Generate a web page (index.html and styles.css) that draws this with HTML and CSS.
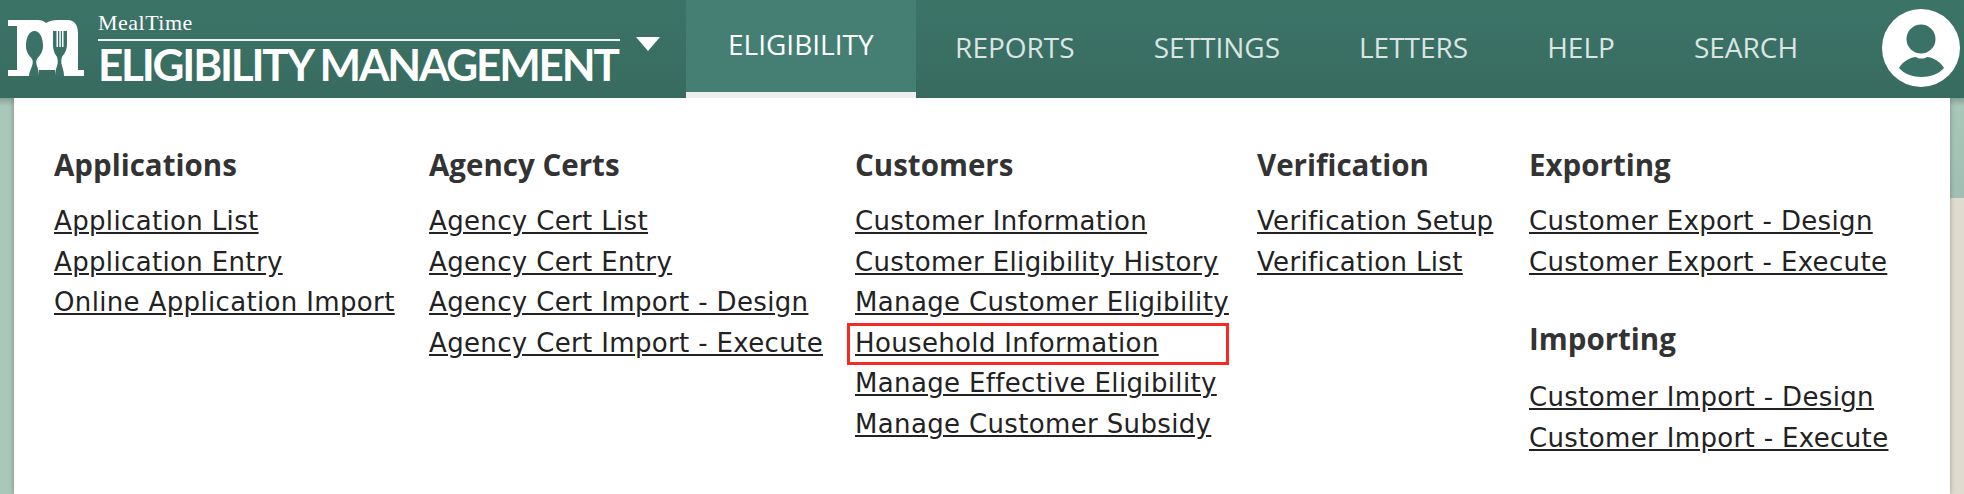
FILE: index.html
```html
<!DOCTYPE html>
<html lang="en">
  <head>
    <meta charset="UTF-8" />
    <title>MealTime Eligibility Management</title>
    <link rel="stylesheet" href="styles.css">
  </head>
  <body>
    <header class="topbar">
      <div class="brand">
        <svg class="brand-logo" viewBox="0 0 76 56" aria-hidden="true">
          <path fill="#fff" d="M0 0H30C33 0 36 1 38 3C41 1 45 0 50 0H60C66 0 70 5 70 13V50H76V56H47V50H31V56H0V50H9V6H0Z"/>
          <path fill="#3b7267" d="M26.500 11C21 11 18 18 18 26C18 33 22 36 24 39C25 41 25 43 24 46C23 49 21 52 21 56H31C31 52 30 49 29 46C28 43 28 41 29 39C31 36 35 33 35 26C35 18 32 11 26.500 11Z"/>
          <path fill="#3b7267" d="M45 11H59V24C59 31 56 34 54 37C53 40 53 43 54 46C55 49 56 52 56 56H47C47 52 48 49 49 46C50 43 50 40 49 37C47 34 45 31 45 24Z"/>
          <path fill="#fff" d="M48.500 11H50V27H48.500ZM51.300 11H52.800V27H51.300ZM54 11H55.500V27H54Z"/>
        </svg>
        <div class="brand-text">
          <div class="brand-small">MealTime</div>
          <div class="brand-big">ELIGIBILITY MANAGEMENT</div>
        </div>
        <span class="brand-caret"></span>
      </div>
      <nav class="nav">
        <a class="nav-item active" href="#">ELIGIBILITY</a>
        <a class="nav-item" href="#">REPORTS</a>
        <a class="nav-item" href="#">SETTINGS</a>
        <a class="nav-item" href="#">LETTERS</a>
        <a class="nav-item" href="#">HELP</a>
        <a class="nav-item" href="#">SEARCH</a>
      </nav>
      <svg class="avatar" viewBox="0 0 78 78" aria-hidden="true">
        <circle cx="39" cy="39" r="39" fill="#fff"/>
        <circle cx="39" cy="30" r="14.500" fill="#3b7267"/>
        <path fill="#3b7267" d="M17 59C21 52 29 48 34 48C37 50 42 50 45 48C50 48 58 52 62 59C57 65 48 68 39.500 68C31 68 22 65 17 59Z"/>
      </svg>
    </header>

    <div class="page">
      <div class="menu">
        <div class="col col-apps">
          <h2>Applications</h2>
          <a href="#">Application List</a>
          <a href="#">Application Entry</a>
          <a href="#">Online Application Import</a>
        </div>
        <div class="col col-certs">
          <h2>Agency Certs</h2>
          <a href="#">Agency Cert List</a>
          <a href="#">Agency Cert Entry</a>
          <a href="#">Agency Cert Import - Design</a>
          <a href="#">Agency Cert Import - Execute</a>
        </div>
        <div class="col col-cust">
          <h2>Customers</h2>
          <a href="#">Customer Information</a>
          <a href="#">Customer Eligibility History</a>
          <a href="#">Manage Customer Eligibility</a>
          <a class="marked" href="#">Household Information</a>
          <a href="#">Manage Effective Eligibility</a>
          <a href="#">Manage Customer Subsidy</a>
        </div>
        <div class="col col-verify">
          <h2>Verification</h2>
          <a href="#">Verification Setup</a>
          <a href="#">Verification List</a>
        </div>
        <div class="col col-export">
          <h2>Exporting</h2>
          <a href="#">Customer Export - Design</a>
          <a href="#">Customer Export - Execute</a>
          <h2 class="second">Importing</h2>
          <a href="#">Customer Import - Design</a>
          <a href="#">Customer Import - Execute</a>
        </div>
      </div>
    </div>
  </body>
</html>
```

FILE: styles.css
```css
body {
  margin: 0;
  height: 494px;
  overflow: hidden;
  display: flex;
  flex-direction: column;
  font-family: "DejaVu Sans", sans-serif;
  background: #fff;
}
.topbar {
  position: relative;
  z-index: 1;
  height: 98px;
  display: flex;
  background: linear-gradient(180deg, #3c7468, #386b60);
  flex-shrink: 0;
}
.brand {
  width: 686px;
  flex-shrink: 0;
  display: flex;
  align-items: flex-start;
  box-sizing: border-box;
  padding: 20px 0 0 8px;
}
.brand-logo {
  width: 76px;
  height: 56px;
  flex-shrink: 0;
}
.brand-text {
  margin: -10px 0 0 14px;
  width: 522px;
  flex-shrink: 0;
  color: #fff;
}
.brand-small {
  font-family: "Liberation Serif", serif;
  font-size: 22px;
  letter-spacing: 0.500px;
  line-height: 26px;
  height: 29px;
  border-bottom: 2px solid #eef4f1;
}
.brand-big {
  font-family: Lato, sans-serif;
  font-weight: 700;
  font-size: 44px;
  line-height: 44px;
  margin-top: 1px;
  letter-spacing: -2.200px;
  white-space: nowrap;
}
.brand-caret {
  margin: 17px 0 0 16px;
  width: 0;
  height: 0;
  border-left: 12px solid transparent;
  border-right: 12px solid transparent;
  border-top: 14px solid #fff;
}
.nav {
  display: flex;
  flex: 1;
}
.nav-item {
  color: #dbe5e1;
  text-decoration: none;
  font-family: "Open Sans", sans-serif;
  font-weight: 500;
  font-size: 28px;
  line-height: 94px;
  padding: 0 39.500px;
  white-space: nowrap;
}
.nav-item.active {
  color: #fff;
  background: #457f73;
  border-bottom: 6px solid #eee;
  line-height: 88px;
  height: 92px;
  padding: 0 42px;
}
.avatar {
  width: 78px;
  height: 78px;
  margin: 9px 4px 0 0;
  flex-shrink: 0;
}
.page {
  flex: 1;
  background:
    linear-gradient(180deg, rgba(0, 0, 0, 0.2), transparent 8px),
    linear-gradient(#a9c8ba, #a9c8ba) left top / 14px 100% no-repeat,
    linear-gradient(180deg, #a9c8ba, #a0bfb2 100px, #dfdbcf 100px);
}
.menu {
  height: 100%;
  width: 1936px;
  margin-left: 14px;
  box-sizing: border-box;
  display: flex;
  padding: 48px 0 0 40px;
  background: #fff;
  box-shadow: 0 0 5px rgba(0, 0, 0, 0.3);
}
.col {
  display: flex;
  flex-direction: column;
  align-items: flex-start;
}
.col-apps { width: 375px; }
.col-certs { width: 426px; }
.col-cust { width: 402px; }
.col-verify { width: 272px; }
h2 {
  margin: 0 0 17px;
  font-family: "Open Sans", sans-serif;
  font-size: 29.500px;
  line-height: 38px;
  font-weight: 700;
  color: #333;
}
h2.second {
  margin-top: 38px;
  margin-bottom: 19px;
}
.col a {
  color: #222;
  font-size: 26px;
  letter-spacing: 0.350px;
  line-height: 40.600px;
  white-space: nowrap;
}
.marked {
  position: relative;
}
.marked::after {
  content: "";
  position: absolute;
  left: -8px;
  top: 0;
  width: 376px;
  height: 36px;
  border: 3px solid #f42b23;
}
```
